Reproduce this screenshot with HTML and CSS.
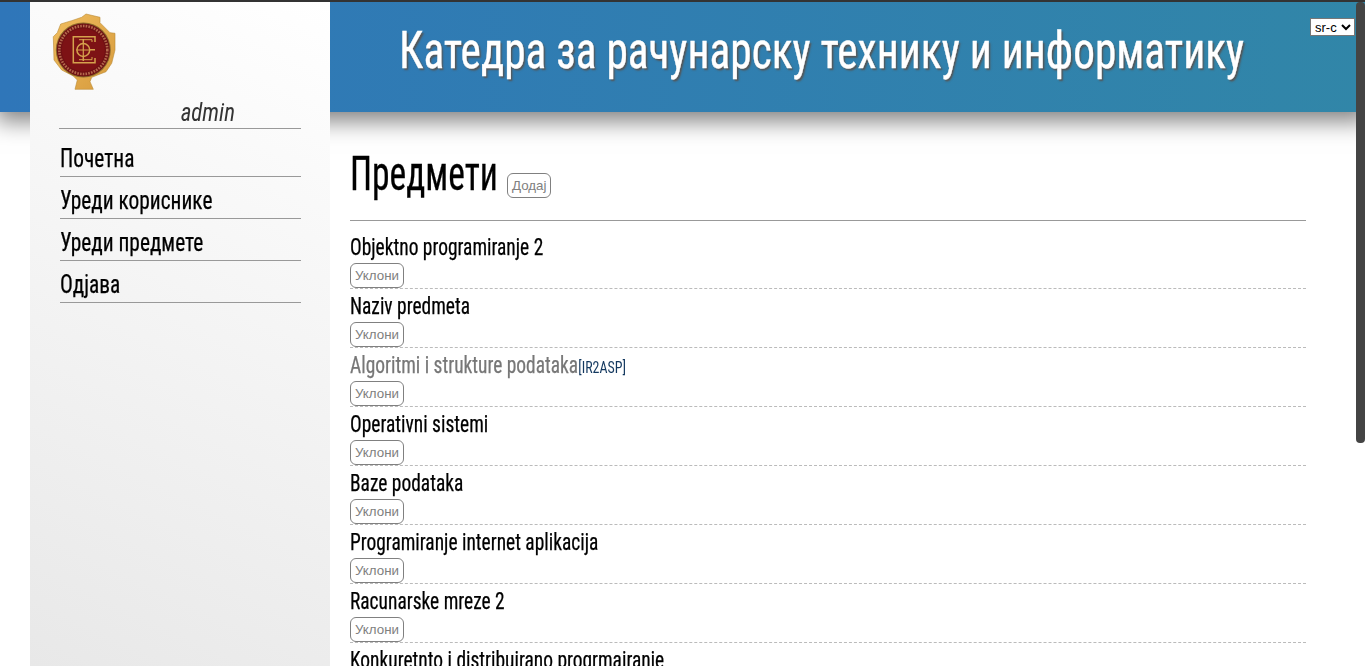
FILE: index.html
```html
<!DOCTYPE html>
<html lang="sr">
<head>
<meta charset="utf-8">
<title>Предмети</title>
<link rel="stylesheet" href="styles.css">
</head>
<body>
<header class="banner">
  <h1 class="banner-title"><span class="banner-text">Катедра за рачунарску технику и информатику</span></h1>
  <select class="lang"><option>sr-c</option></select>
</header>
<div class="layout">
  <aside class="sidebar">
    <svg class="logo" width="64" height="78" viewBox="0 0 64 78" aria-hidden="true">
      <defs>
        <linearGradient id="gold" x1="0" y1="0" x2="1" y2="1">
          <stop offset="0" stop-color="#f0bd5e"/>
          <stop offset="1" stop-color="#d69a3c"/>
        </linearGradient>
      </defs>
      <path d="M1.3 23.7 L5.3 19.7 L8.7 11 L19.7 7.7 L29.7 4.3 L34 1 L48 4.3 L48 9.7 L58 19.7 L63 20.3 L63 37 L59.7 50.3 L54 58.7 L39.7 64.3 L38 68.7 L41.3 76.3 L23 76.3 L25.3 67 L21.3 63 L9.7 57 L2 47 Z" fill="url(#gold)" stroke="#b98a34" stroke-width=".6"/>
      <circle cx="31.3" cy="37" r="27.5" fill="#8a6a2c"/>
      <circle cx="31.3" cy="37" r="26.5" fill="#6f1114"/>
      <circle cx="31.3" cy="37" r="24" fill="none" stroke="#b4694c" stroke-width="2.6" stroke-dasharray="1.6 1.2"/>
      <circle cx="31.3" cy="37" r="21.5" fill="#7d1215"/>
      <path d="M43 29 V23.7 H21.3 V49.7 H43 V45 M24.5 36.7 H43 M31.3 26 V48" fill="none" stroke="#d5a24d" stroke-width="1.5"/>
      <path d="M27 26.7 H40 V29 M27 46.7 H40 V44" fill="none" stroke="#d5a24d" stroke-width="1"/>
      <circle cx="31.3" cy="37" r="6.4" fill="#7d1215" stroke="#d5a24d" stroke-width="1.5"/>
      <path d="M31.3 30.5 V43.5 M24.9 37 H37.7" stroke="#d5a24d" stroke-width="1.2"/>
    </svg>
    <div class="user"><span class="user-name">admin</span></div>
    <nav class="menu">
      <a class="menu-item"><span class="menu-text">Почетна</span></a>
      <a class="menu-item"><span class="menu-text">Уреди кориснике</span></a>
      <a class="menu-item"><span class="menu-text">Уреди предмете</span></a>
      <a class="menu-item"><span class="menu-text">Одјава</span></a>
    </nav>
  </aside>
  <main class="content">
    <div class="page-head">
      <h2 class="page-title">Предмети</h2>
      <button class="btn">Додај</button>
    </div>
    <ul class="courses">
      <li class="course"><div class="course-name">Objektno programiranje 2</div><button class="btn">Уклони</button></li>
      <li class="course"><div class="course-name">Naziv predmeta</div><button class="btn">Уклони</button></li>
      <li class="course"><div class="course-name muted">Algoritmi i strukture podataka<span class="code">[IR2ASP]</span></div><button class="btn">Уклони</button></li>
      <li class="course"><div class="course-name">Operativni sistemi</div><button class="btn">Уклони</button></li>
      <li class="course"><div class="course-name">Baze podataka</div><button class="btn">Уклони</button></li>
      <li class="course"><div class="course-name">Programiranje internet aplikacija</div><button class="btn">Уклони</button></li>
      <li class="course"><div class="course-name">Racunarske mreze 2</div><button class="btn">Уклони</button></li>
      <li class="course"><div class="course-name">Konkuretnto i distribuirano progrmairanje</div><button class="btn">Уклони</button></li>
    </ul>
  </main>
</div>
<div class="scroll-thumb"></div>
</body>
</html>
```
FILE: styles.css
```css
* { box-sizing: border-box; }
html, body { margin: 0; height: 666px; overflow: hidden; background: #fff; }
body { font-family: "Liberation Sans Narrow", "Roboto Condensed", "Liberation Sans", sans-serif; color: #000; position: relative; }

.banner {
  height: 112px;
  border-top: 2px solid #333;
  background: linear-gradient(90deg, #2f76b9, #3186a8);
  box-shadow: 0 5px 22px 4px rgba(0,0,0,.5);
  padding-left: 330px;
  padding-right: 51px;
  position: relative;
}
.banner-title {
  margin: 0;
  padding-top: 14px;
  display: flex;
  justify-content: center;
  font-size: 52px;
  line-height: 70px;
  font-weight: 400;
  -webkit-text-stroke: .4px #fff;
  color: #fff;
  text-shadow: 2px 2px 2px #555;
}
.banner-text { flex: none; white-space: nowrap; transform: scaleX(.834); }
.lang {
  position: absolute;
  top: 16px;
  right: 10px;
  width: 45px;
  height: 18px;
  font: 13px "Liberation Sans", sans-serif;
  background: #fff;
  border: 1px solid #777;
  padding: 0;
}

.layout { display: flex; margin-top: -112px; padding-left: 30px; position: relative; }
.sidebar {
  width: 300px;
  height: 664px;
  margin-top: 2px;
  flex: none;
  background: linear-gradient(205deg, #fff, #e8e8e8);
  padding: 11px 29px 0 29px;
}
.logo { display: block; margin-left: -7px; filter: blur(.35px); }
.user {
  margin-top: 6px;
  font-size: 26px;
  line-height: 31px;
  font-style: italic;
  text-align: center;
  padding-left: 55px;
  color: #333;
  border-bottom: 1px solid #999;
}
.user-name { display: inline-block; transform: scaleX(.88); }
.menu { display: flex; flex-direction: column; margin-top: 6px; margin-left: 1px; }
.menu-item {
  height: 42px;
  padding-top: 7px;
  font-size: 25px;
  line-height: 33px;
  -webkit-text-stroke: .25px #000;
  border-bottom: 1px solid #999;
}
.menu-text { display: inline-block; white-space: nowrap; transform: scaleX(.855); transform-origin: left; }
.content { flex: 1; padding: 112px 59px 0 20px; min-width: 0; }
.page-head { display: flex; align-items: flex-end; gap: 10px; height: 109px; padding-bottom: 22px; border-bottom: 1px solid #999; }
.page-title {
  margin: 0;
  width: 147px;
  white-space: nowrap;
  font-size: 48px;
  line-height: 48px;
  font-weight: 400;
  -webkit-text-stroke: .3px #000;
  transform: scaleX(.74);
  transform-origin: left;
}
.btn {
  font: 13.33px/16px "Liberation Sans", sans-serif;
  color: #808080;
  background: #fff;
  border: 1px solid #808080;
  border-radius: 6px;
  padding: 3px 4px;
  height: 25px;
}
.courses { list-style: none; margin: 9px 0 0; padding: 0; }
.course { height: 59px; border-bottom: 1px dashed #bbb; }
.course-name {
  font-size: 23px;
  line-height: 35px;
  height: 33px;
  -webkit-text-stroke: .25px currentColor;
  white-space: nowrap;
  transform: scaleX(.845);
  transform-origin: left;
}
.muted { color: #777; }
.code { font-size: 16.5px; color: #13385f; -webkit-text-stroke: 0; }
.course .btn { display: block; }

.scroll-thumb {
  position: absolute;
  top: 2px;
  right: 0;
  width: 9px;
  height: 441px;
  background: #444;
  border-radius: 4px;
}
```
